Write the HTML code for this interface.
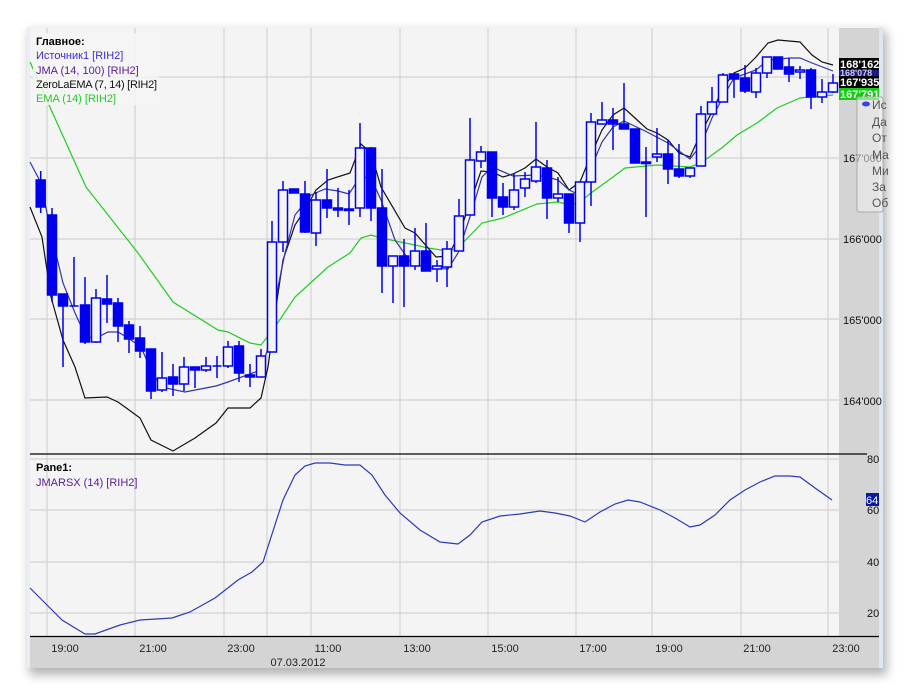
<!DOCTYPE html>
<html><head><meta charset="utf-8"><style>
body{margin:0;background:#fff;width:911px;height:693px;overflow:hidden;font-family:"Liberation Sans","DejaVu Sans",sans-serif;}
svg{position:absolute;left:0;top:0}
</style></head><body>
<svg width="911" height="693" viewBox="0 0 911 693" xmlns="http://www.w3.org/2000/svg" font-family="Liberation Sans, DejaVu Sans, sans-serif">
<defs><filter id="sh" x="-5%" y="-5%" width="110%" height="115%"><feGaussianBlur stdDeviation="5"/></filter></defs>
<rect x="29" y="31" width="858" height="644" fill="#777" opacity="0.55" filter="url(#sh)"/>
<rect x="27" y="27" width="856" height="641" fill="#f4f4f4"/>
<rect x="27" y="27" width="3" height="641" fill="#e8eef6"/>
<rect x="879" y="27" width="4" height="641" fill="#dfe6f0"/>
<rect x="839" y="28" width="40" height="609" fill="#d4d4d4"/>
<rect x="30" y="637" width="849" height="31" fill="#d4d4d4"/>
<g stroke="#d2d2d2" stroke-width="1.2">
<line x1="47" y1="28" x2="47" y2="637"/><line x1="135" y1="28" x2="135" y2="637"/><line x1="224" y1="28" x2="224" y2="637"/><line x1="267" y1="28" x2="267" y2="637"/><line x1="311" y1="28" x2="311" y2="637"/><line x1="400" y1="28" x2="400" y2="637"/><line x1="488" y1="28" x2="488" y2="637"/><line x1="576" y1="28" x2="576" y2="637"/><line x1="652" y1="28" x2="652" y2="637"/><line x1="741" y1="28" x2="741" y2="637"/><line x1="828" y1="28" x2="828" y2="637"/>
<line x1="30" y1="77" x2="839" y2="77"/><line x1="30" y1="158" x2="839" y2="158"/><line x1="30" y1="239" x2="839" y2="239"/><line x1="30" y1="319" x2="839" y2="319"/><line x1="30" y1="400" x2="839" y2="400"/>
<line x1="30" y1="459" x2="839" y2="459"/><line x1="30" y1="510" x2="839" y2="510"/><line x1="30" y1="562" x2="839" y2="562"/><line x1="30" y1="613" x2="839" y2="613"/>
</g>
<line x1="30" y1="454" x2="867" y2="454" stroke="#000" stroke-width="1.3"/>
<line x1="30" y1="636.5" x2="879" y2="636.5" stroke="#000" stroke-width="1.3"/>
<polyline fill="none" stroke="#22cc22" stroke-width="1.2" points="30,62 49,105 86,187 138,253 173,302 218,330 228,332 250,343 261,345 275,327 295,297 305,288 328,267 350,253 361,238 371,235 381,238 415,245 428,248 448,251 458,248 482,223 503,218 537,204 558,202 570,205 580,202 591,193 613,177 625,168 657,165 690,167 701,163 723,147 737,135 757,123 777,108 800,98 833,95"/>
<polyline fill="none" stroke="#111" stroke-width="1.2" points="30,207 42,237 51,297 63,340 75,367 85,398 107,397 118,402 140,418 151,440 173,451 195,438 216,423 228,408 250,408 261,398 268,367 276,307 283,260 295,225 305,210 316,190 328,180 350,173 361,144 371,153 381,187 405,228 415,233 436,257 448,256 458,237 470,203 481,171 492,172 503,177 513,174 525,168 536,159 547,167 558,173 569,190 580,182 591,155 602,130 613,115 624,108 635,118 647,129 657,133 668,140 679,153 690,157 701,133 712,112 723,88 734,73 745,68 756,57 768,43 778,40 800,42 812,55 822,62 833,65"/>
<polyline fill="none" stroke="#3333aa" stroke-width="1.2" points="30,162 41,183 51,233 63,283 75,313 86,337 96,338 108,332 118,332 128,338 141,347 151,370 161,387 185,392 216,386 228,382 261,370 268,348 278,287 285,253 295,215 311,195 325,189 338,191 349,194 360,177 371,178 381,200 395,240 411,263 428,268 448,269 458,253 470,217 482,177 492,167 513,176 537,175 547,177 558,180 569,190 580,195 591,168 602,142 613,127 624,121 647,132 668,143 690,159 701,145 712,118 723,97 734,78 756,70 768,60 790,58 800,58 812,63 833,71"/>
<g stroke="#0000ee" stroke-width="1.5">
<line x1="40.7" y1="171" x2="40.7" y2="213"/><rect x="36.2" y="180" width="9" height="27" fill="#0000ee"/>
<line x1="52" y1="208" x2="52" y2="302"/><rect x="47.5" y="215" width="9" height="80" fill="#0000ee"/>
<line x1="63" y1="294" x2="63" y2="367"/><rect x="58.5" y="294" width="9" height="12" fill="#0000ee"/>
<line x1="74" y1="257" x2="74" y2="306"/><line x1="69.5" y1="306" x2="78.5" y2="306"/>
<line x1="85" y1="277" x2="85" y2="344"/><rect x="80.5" y="305" width="9" height="37" fill="#0000ee"/>
<line x1="96" y1="289" x2="96" y2="343"/><rect x="91.5" y="298" width="9" height="44" fill="#f4f4f4"/>
<line x1="107" y1="275" x2="107" y2="323"/><rect x="102.5" y="299" width="9" height="5" fill="#0000ee"/>
<line x1="118" y1="298" x2="118" y2="342"/><rect x="113.5" y="303" width="9" height="23" fill="#0000ee"/>
<line x1="129" y1="321" x2="129" y2="353"/><rect x="124.5" y="325" width="9" height="14" fill="#0000ee"/>
<line x1="140" y1="326" x2="140" y2="358"/><rect x="135.5" y="338" width="9" height="13" fill="#0000ee"/>
<line x1="151" y1="349" x2="151" y2="399"/><rect x="146.5" y="349" width="9" height="42" fill="#0000ee"/>
<line x1="162" y1="352" x2="162" y2="392"/><rect x="157.5" y="378" width="9" height="12" fill="#f4f4f4"/>
<line x1="173" y1="364" x2="173" y2="396"/><rect x="168.5" y="377" width="9" height="7" fill="#0000ee"/>
<line x1="184" y1="357" x2="184" y2="391"/><rect x="179.5" y="367" width="9" height="17" fill="#f4f4f4"/>
<line x1="195" y1="367" x2="195" y2="388"/><rect x="190.5" y="367" width="9" height="3" fill="#0000ee"/>
<line x1="206" y1="357" x2="206" y2="372"/><rect x="201.5" y="366" width="9" height="4" fill="#f4f4f4"/>
<line x1="217" y1="356" x2="217" y2="378"/><line x1="212.5" y1="366" x2="221.5" y2="366"/>
<line x1="228" y1="341" x2="228" y2="368"/><rect x="223.5" y="347" width="9" height="19" fill="#f4f4f4"/>
<line x1="239" y1="341" x2="239" y2="382"/><rect x="234.5" y="346" width="9" height="27" fill="#0000ee"/>
<line x1="250" y1="364" x2="250" y2="387"/><rect x="245.5" y="375" width="9" height="2" fill="#0000ee"/>
<line x1="261" y1="349" x2="261" y2="377"/><rect x="256.5" y="356" width="9" height="21" fill="#f4f4f4"/>
<line x1="272" y1="221" x2="272" y2="352"/><rect x="267.5" y="242" width="9" height="110" fill="#f4f4f4"/>
<line x1="283" y1="181" x2="283" y2="252"/><rect x="278.5" y="190" width="9" height="52" fill="#f4f4f4"/>
<rect x="289.5" y="189" width="9" height="4" fill="#0000ee"/>
<line x1="305" y1="181" x2="305" y2="233"/><rect x="300.5" y="194" width="9" height="38" fill="#0000ee"/>
<line x1="316" y1="192" x2="316" y2="246"/><rect x="311.5" y="200" width="9" height="33" fill="#f4f4f4"/>
<line x1="327" y1="169" x2="327" y2="218"/><rect x="322.5" y="200" width="9" height="8" fill="#0000ee"/>
<line x1="338" y1="188" x2="338" y2="217"/><rect x="333.5" y="208" width="9" height="2" fill="#0000ee"/>
<line x1="349" y1="190" x2="349" y2="225"/><rect x="344.5" y="209" width="9" height="1.5" fill="#0000ee"/>
<line x1="360" y1="123" x2="360" y2="217"/><rect x="355.5" y="148" width="9" height="60" fill="#f4f4f4"/>
<line x1="371" y1="147" x2="371" y2="221"/><rect x="366.5" y="148" width="9" height="60" fill="#0000ee"/>
<line x1="382" y1="169" x2="382" y2="293"/><rect x="377.5" y="208" width="9" height="58" fill="#0000ee"/>
<line x1="393" y1="256" x2="393" y2="303"/><rect x="388.5" y="256" width="9" height="10" fill="#f4f4f4"/>
<line x1="404" y1="239" x2="404" y2="307"/><rect x="399.5" y="256" width="9" height="10" fill="#0000ee"/>
<line x1="415" y1="228" x2="415" y2="270"/><rect x="410.5" y="251" width="9" height="15" fill="#f4f4f4"/>
<line x1="426" y1="223" x2="426" y2="271"/><rect x="421.5" y="251" width="9" height="20" fill="#0000ee"/>
<line x1="437" y1="260" x2="437" y2="282"/><rect x="432.5" y="266" width="9" height="3" fill="#f4f4f4"/>
<line x1="447" y1="241" x2="447" y2="287"/><rect x="442.5" y="249" width="9" height="18" fill="#f4f4f4"/>
<line x1="459" y1="199" x2="459" y2="251"/><rect x="454.5" y="216" width="9" height="35" fill="#f4f4f4"/>
<line x1="470" y1="118" x2="470" y2="215"/><rect x="465.5" y="160" width="9" height="55" fill="#f4f4f4"/>
<line x1="481" y1="146" x2="481" y2="168"/><rect x="476.5" y="152" width="9" height="9" fill="#f4f4f4"/>
<line x1="492" y1="152" x2="492" y2="217"/><rect x="487.5" y="152" width="9" height="46" fill="#0000ee"/>
<line x1="503" y1="183" x2="503" y2="215"/><rect x="498.5" y="197" width="9" height="10" fill="#0000ee"/>
<line x1="514" y1="173" x2="514" y2="210"/><rect x="509.5" y="190" width="9" height="17" fill="#f4f4f4"/>
<line x1="525" y1="172" x2="525" y2="197"/><rect x="520.5" y="179" width="9" height="9" fill="#f4f4f4"/>
<line x1="536" y1="122" x2="536" y2="183"/><rect x="531.5" y="167" width="9" height="14" fill="#f4f4f4"/>
<line x1="547" y1="160" x2="547" y2="219"/><rect x="542.5" y="168" width="9" height="30" fill="#0000ee"/>
<line x1="558" y1="177" x2="558" y2="202"/><rect x="553.5" y="194" width="9" height="4" fill="#f4f4f4"/>
<line x1="569" y1="194" x2="569" y2="233"/><rect x="564.5" y="194" width="9" height="29" fill="#0000ee"/>
<line x1="580" y1="182" x2="580" y2="242"/><rect x="575.5" y="182" width="9" height="41" fill="#f4f4f4"/>
<line x1="591" y1="113" x2="591" y2="206"/><rect x="586.5" y="122" width="9" height="60" fill="#f4f4f4"/>
<line x1="602" y1="102" x2="602" y2="124"/><rect x="597.5" y="120" width="9" height="4" fill="#f4f4f4"/>
<line x1="613" y1="108" x2="613" y2="150"/><rect x="608.5" y="120" width="9" height="4" fill="#0000ee"/>
<line x1="624" y1="83" x2="624" y2="129"/><rect x="619.5" y="124" width="9" height="5" fill="#0000ee"/>
<rect x="630.5" y="129" width="9" height="34" fill="#0000ee"/>
<line x1="646" y1="147" x2="646" y2="217"/><rect x="641.5" y="162" width="9" height="1.5" fill="#0000ee"/>
<line x1="657" y1="128" x2="657" y2="162"/><rect x="652.5" y="154" width="9" height="3" fill="#f4f4f4"/>
<line x1="668" y1="140" x2="668" y2="184"/><rect x="663.5" y="154" width="9" height="15" fill="#0000ee"/>
<line x1="679" y1="144" x2="679" y2="178"/><rect x="674.5" y="169" width="9" height="7" fill="#0000ee"/>
<line x1="690" y1="168" x2="690" y2="178"/><rect x="685.5" y="168" width="9" height="8" fill="#f4f4f4"/>
<line x1="701" y1="106" x2="701" y2="166"/><rect x="696.5" y="114" width="9" height="52" fill="#f4f4f4"/>
<line x1="712" y1="87" x2="712" y2="114"/><rect x="707.5" y="102" width="9" height="12" fill="#f4f4f4"/>
<line x1="723" y1="73" x2="723" y2="102"/><rect x="718.5" y="75" width="9" height="27" fill="#f4f4f4"/>
<line x1="734" y1="74" x2="734" y2="98"/><rect x="729.5" y="74" width="9" height="5" fill="#0000ee"/>
<line x1="745" y1="65" x2="745" y2="93"/><rect x="740.5" y="78" width="9" height="13" fill="#0000ee"/>
<line x1="756" y1="68" x2="756" y2="98"/><rect x="751.5" y="73" width="9" height="19" fill="#f4f4f4"/>
<line x1="767" y1="57" x2="767" y2="78"/><rect x="762.5" y="57" width="9" height="16" fill="#f4f4f4"/>
<rect x="773.5" y="57" width="9" height="12" fill="#0000ee"/>
<line x1="789" y1="58" x2="789" y2="82"/><rect x="784.5" y="67" width="9" height="7" fill="#0000ee"/>
<line x1="800" y1="66" x2="800" y2="79"/><rect x="795.5" y="70" width="9" height="2" fill="#f4f4f4"/>
<line x1="811" y1="68" x2="811" y2="109"/><rect x="806.5" y="70" width="9" height="27" fill="#0000ee"/>
<line x1="822" y1="79" x2="822" y2="103"/><rect x="817.5" y="92" width="9" height="5" fill="#f4f4f4"/>
<line x1="833" y1="74" x2="833" y2="93"/><rect x="828.5" y="83" width="9" height="9" fill="#f4f4f4"/>
</g>
<polyline fill="none" stroke="#2a3bb8" stroke-width="1.2" points="30,588 42,600 62,620 85,634 95,634 120,625 140,620 172,618 190,612 215,598 238,580 252,572 263,562 283,500 295,475 305,466 315,463 330,463 345,465 360,465 372,475 385,495 400,513 420,530 440,542 458,544 470,535 482,522 500,516 520,514 540,511 555,513 570,516 585,522 600,512 615,504 628,500 640,502 660,510 675,518 690,527 700,525 715,515 730,500 745,490 760,482 775,476 790,476 800,477 815,488 832,500"/>
<rect x="33" y="33" width="126" height="72" fill="#f4f4f4" opacity="0.85"/>
<g font-size="11">
<text x="36" y="45" font-weight="bold" fill="#000">Главное:</text>
<text x="36" y="59" fill="#3a2bd8">Источник1 [RIH2]</text>
<text x="36" y="74" fill="#5a1a9a">JMA (14, 100) [RIH2]</text>
<text x="36" y="88" fill="#111" textLength="121">ZeroLaEMA (7, 14) [RIH2]</text>
<text x="36" y="102" fill="#22cc22">EMA (14) [RIH2]</text>
<text x="36" y="471" font-weight="bold" fill="#000">Pane1:</text>
<text x="36" y="486" fill="#5a1a9a">JMARSX (14) [RIH2]</text>
</g>
<g font-size="11" fill="#111">
<text x="843" y="162">167'000</text>
<text x="843" y="243">166'000</text>
<text x="843" y="324">165'000</text>
<text x="843" y="405">164'000</text>
<text x="867" y="463">80</text>
<text x="867" y="514">60</text>
<text x="867" y="566">40</text>
<text x="867" y="617">20</text>
</g>
<rect x="839" y="58" width="40" height="12" fill="#000"/>
<rect x="839" y="70" width="40" height="6" fill="#1a1a8a"/>
<rect x="839" y="76" width="40" height="12" fill="#000"/>
<rect x="839" y="88" width="40" height="12" fill="#11cc11"/>
<g font-size="11" fill="#fff" font-weight="bold">
<text x="840" y="68">168'162</text>
<text x="840" y="86">167'935</text>
<text x="840" y="98">167'791</text>
</g>
<text x="840" y="76" font-size="9" fill="#ccd" font-weight="bold">168'078</text>
<rect x="866" y="493" width="13" height="13" fill="#0a1aa0"/>
<text x="866" y="504" font-size="11" fill="#fff">64</text>
<rect x="857" y="97" width="26" height="115" rx="2" fill="#f0f0f0" fill-opacity="0.55" stroke="#aaa"/>
<ellipse cx="866" cy="104" rx="4" ry="2.5" fill="#3344ee"/>
<g font-size="12" fill="#555">
<text x="872" y="109">Ис</text><text x="872" y="126">Да</text><text x="872" y="142">От</text><text x="872" y="159">Ма</text><text x="872" y="175">Ми</text><text x="872" y="191">За</text><text x="872" y="207">Об</text>
</g>
<g font-size="11" fill="#222" text-anchor="middle">
<text x="65" y="652">19:00</text><text x="153" y="652">21:00</text><text x="241" y="652">23:00</text><text x="328" y="652">11:00</text><text x="417" y="652">13:00</text><text x="505" y="652">15:00</text><text x="593" y="652">17:00</text><text x="669" y="652">19:00</text><text x="757" y="652">21:00</text><text x="846" y="652">23:00</text>
<text x="298" y="666">07.03.2012</text>
</g>
</svg>
</body></html>
